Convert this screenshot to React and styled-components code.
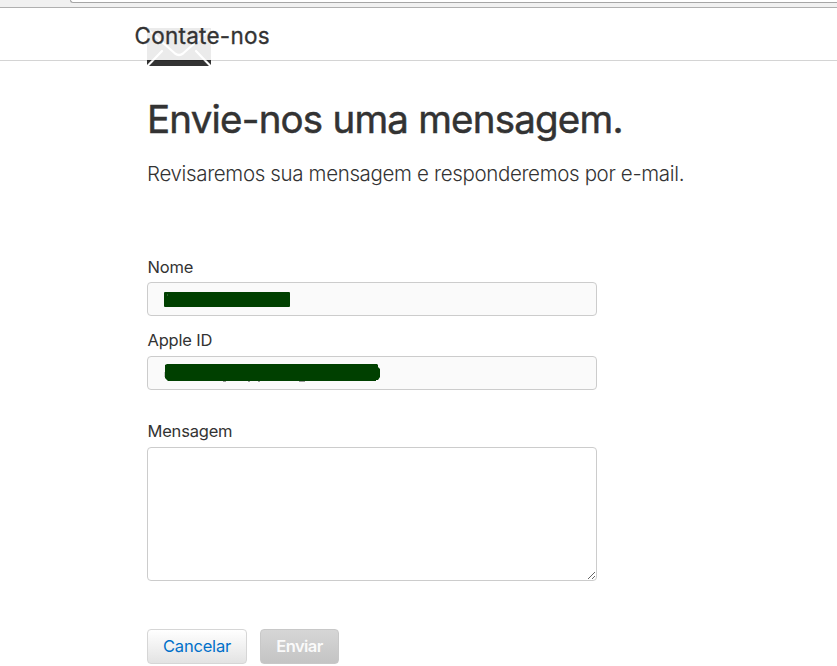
import React from "react";
import styled, { createGlobalStyle } from "styled-components";

const GlobalStyle = createGlobalStyle`
  * {
    box-sizing: border-box;
  }
  body {
    margin: 0;
    height: 666px;
    overflow: hidden;
    background: #fff;
    color: #333;
    font-family: Inter, "Liberation Sans", sans-serif;
  }
`;

const BrowserBar = styled.div`
  height: 8px;
  padding-left: 70px;
  background: #f1f1f1;
  border-bottom: 1px solid #b0b0b0;
`;

const AddressBar = styled.div`
  height: 3px;
  background: #fff;
  border: 1px solid #a6a6a6;
  border-top: 0;
  border-right: 0;
  border-bottom-left-radius: 3px;
`;

const Header = styled.header`
  position: relative;
  z-index: 1;
  height: 53px;
  padding-left: 134.5px;
  background: rgba(255, 255, 255, 0.9);
  background-clip: padding-box;
  border-bottom: 1px solid rgba(0, 0, 0, 0.17);
`;

const SiteName = styled.div`
  font-size: 22.5px;
  font-weight: 400;
  line-height: 28px;
  padding-top: 14px;
  letter-spacing: 0.25px;
  -webkit-text-stroke: 0.3px #333;
`;

const Content = styled.main`
  width: 690px;
  margin-top: -33px;
  padding-left: 147px;
`;

const Envelope = styled.svg`
  display: block;
  width: 64px;
  height: 38px;
`;

const Title = styled.h1`
  margin: 29px 0 0;
  font-size: 38.5px;
  font-weight: 400;
  line-height: 48px;
  letter-spacing: -0.8px;
  white-space: nowrap;
  -webkit-text-stroke: 0.5px #333;
`;

const Intro = styled.p`
  margin: 17px 0 0;
  font-size: 20.5px;
  font-weight: 300;
  line-height: 28px;
  letter-spacing: -0.35px;
  white-space: nowrap;
`;

const Form = styled.form`
  width: 450px;
  padding-top: 69px;
`;

const Field = styled.div`
  margin-top: ${({ $space }) => $space || 0}px;
`;

const Label = styled.label`
  display: block;
  height: 25px;
  font-size: 16.5px;
  line-height: ${({ $line }) => $line || 18}px;
  letter-spacing: -0.2px;
  text-indent: 0.5px;
`;

const ReadOnlyBox = styled.div`
  display: flex;
  height: 34px;
  padding: ${({ $top }) => $top}px 0 0 16px;
  background: #fafafa;
  border: 1px solid #ccc;
  border-radius: 4px;
`;

const Marker = styled.svg`
  display: block;
  flex: none;
`;

const TextArea = styled.textarea`
  display: block;
  width: 450px;
  height: 134px;
  margin: 0;
  background: #fff;
  border: 1px solid #ccc;
  border-radius: 4px;
  outline: none;
  resize: both;
`;

const Buttons = styled.div`
  display: flex;
  gap: 13px;
  margin-top: 48px;
`;

const Button = styled.button`
  width: ${({ $width }) => $width}px;
  height: 35px;
  padding: 0 0 1px;
  font-family: inherit;
  font-size: 16.5px;
  font-weight: ${({ disabled }) => (disabled ? 600 : 400)};
  letter-spacing: ${({ disabled }) => (disabled ? -0.55 : -0.2)}px;
  color: ${({ disabled }) => (disabled ? "#fafafa" : "#0070c9")};
  background: ${({ disabled }) =>
    disabled
      ? "linear-gradient(#d6d6d6, #c4c4c4)"
      : "linear-gradient(#fff, #e3e3e3)"};
  border: 1px solid ${({ disabled }) => (disabled ? "#c8c8c8" : "#d6d6d6")};
  border-radius: 4px;
`;

const App = () => {
  return (
    <>
      <GlobalStyle />
      <BrowserBar>
        <AddressBar />
      </BrowserBar>
      <Header>
        <SiteName>Contate-nos</SiteName>
      </Header>
      <Content>
        <Envelope viewBox="0 0 64 38">
          <rect width="64" height="38" fill="#333" />
          <path
            d="M2 2.5L28 25.5Q32 28.5 36 25.5L62 2.5M15 23L0 38.5M49 23L64 38.5"
            fill="none"
            stroke="#fff"
            strokeWidth="2.2"
            strokeLinecap="round"
          />
        </Envelope>
        <Title>Envie-nos uma mensagem.</Title>
        <Intro>Revisaremos sua mensagem e responderemos por e-mail.</Intro>
        <Form>
          <Field>
            <Label $line={20}>Nome</Label>
            <ReadOnlyBox $top={9}>
              <Marker width="126" height="15">
                <rect width="126" height="15" rx="1" fill="#004000" />
                <path d="M3 3h1" stroke="#5c805c" />
              </Marker>
            </ReadOnlyBox>
          </Field>
          <Field $space={15}>
            <Label>Apple ID</Label>
            <ReadOnlyBox $top={7}>
              <Marker width="217" height="19">
                <path
                  d="M1 8v5M59 17.5h3M84 17.5h2M94 17.5h2M135 17.5h6"
                  stroke="#999"
                  fill="none"
                />
                <path
                  d="M3 0H213L214 1V3L216 5V13L214 16H212V17H4L1 14V1Z"
                  fill="#004000"
                />
              </Marker>
            </ReadOnlyBox>
          </Field>
          <Field $space={32}>
            <Label>Mensagem</Label>
            <TextArea />
          </Field>
          <Buttons>
            <Button type="button" $width={100}>
              Cancelar
            </Button>
            <Button type="submit" $width={79} disabled>
              Enviar
            </Button>
          </Buttons>
        </Form>
      </Content>
    </>
  );
};

export default App;
